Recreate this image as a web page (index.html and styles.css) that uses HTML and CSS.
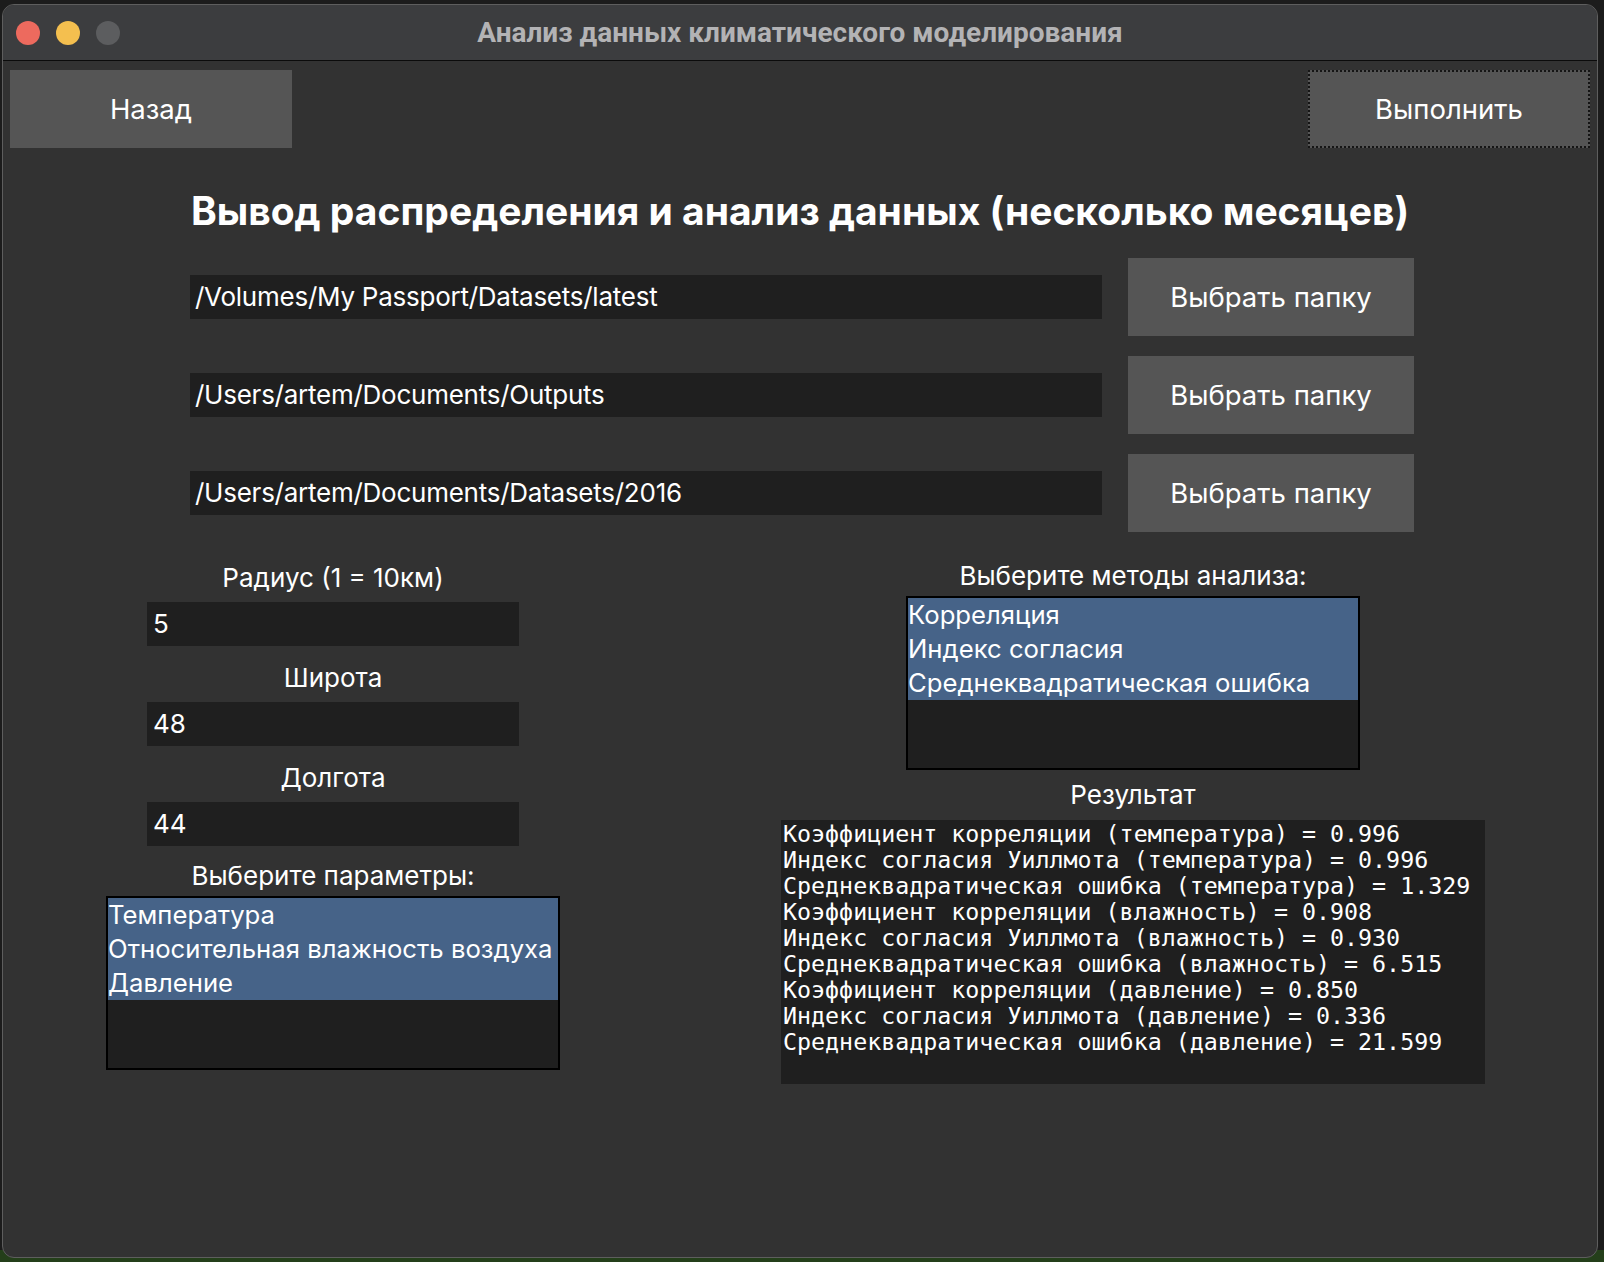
FILE: index.html
```html
<!DOCTYPE html>
<html lang="ru">
<head>
<meta charset="utf-8">
<title>Анализ данных климатического моделирования</title>
<link rel="stylesheet" href="styles.css">
</head>
<body>
<div class="window">
  <div class="titlebar">
    <div class="lights">
      <span class="light red"></span>
      <span class="light yellow"></span>
      <span class="light gray"></span>
    </div>
    <div class="title">Анализ данных климатического моделирования</div>
    <div class="spacer"></div>
  </div>
  <div class="content">
    <div class="toolbar">
      <button class="btn btn-top">Назад</button>
      <button class="btn btn-top focused">Выполнить</button>
    </div>
    <h1 class="heading">Вывод распределения и анализ данных (несколько месяцев)</h1>
    <div class="paths">
      <div class="path-row">
        <div class="entry entry-path">/Volumes/My Passport/Datasets/latest</div>
        <button class="btn btn-folder">Выбрать папку</button>
      </div>
      <div class="path-row">
        <div class="entry entry-path">/Users/artem/Documents/Outputs</div>
        <button class="btn btn-folder">Выбрать папку</button>
      </div>
      <div class="path-row">
        <div class="entry entry-path">/Users/artem/Documents/Datasets/2016</div>
        <button class="btn btn-folder">Выбрать папку</button>
      </div>
    </div>
    <div class="lower">
      <div class="col">
        <div class="field">
          <div class="label">Радиус (1 = 10км)</div>
          <div class="entry entry-small">5</div>
        </div>
        <div class="field">
          <div class="label">Широта</div>
          <div class="entry entry-small">48</div>
        </div>
        <div class="field">
          <div class="label">Долгота</div>
          <div class="entry entry-small">44</div>
        </div>
        <div class="list-label">Выберите параметры:</div>
        <div class="listbox">
          <div class="item sel">Температура</div>
          <div class="item sel">Относительная влажность воздуха</div>
          <div class="item sel">Давление</div>
        </div>
      </div>
      <div class="col">
        <div class="list-label">Выберите методы анализа:</div>
        <div class="listbox">
          <div class="item sel">Корреляция</div>
          <div class="item sel">Индекс согласия</div>
          <div class="item sel">Среднеквадратическая ошибка</div>
        </div>
        <div class="result-label">Результат</div>
        <pre class="result">Коэффициент корреляции (температура) = 0.996
Индекс согласия Уиллмота (температура) = 0.996
Среднеквадратическая ошибка (температура) = 1.329
Коэффициент корреляции (влажность) = 0.908
Индекс согласия Уиллмота (влажность) = 0.930
Среднеквадратическая ошибка (влажность) = 6.515
Коэффициент корреляции (давление) = 0.850
Индекс согласия Уиллмота (давление) = 0.336
Среднеквадратическая ошибка (давление) = 21.599</pre>
      </div>
    </div>
  </div>
</div>
</body>
</html>
```

FILE: styles.css
```css
* { box-sizing: border-box; }
html, body { margin: 0; }
body {
  width: 1604px;
  height: 1262px;
  padding: 4px 6px 4px 2px;
  background: linear-gradient(to bottom, #1c1c1c 0, #1c1c1c 1250px, #243f1a 1250px);
  font-family: "Inter", "Noto Sans", sans-serif;
  color: #ffffff;
  overflow: hidden;
}
.window {
  width: 1596px;
  height: 1254px;
  border: 1px solid #5e5e5e;
  border-radius: 12px;
  overflow: hidden;
  background: #323232;
  display: flex;
  flex-direction: column;
}
.titlebar {
  height: 56px;
  flex: none;
  background: #3c3d3f;
  border-bottom: 1px solid #0b0b0b;
  display: grid;
  grid-template-columns: 1fr auto 1fr;
  align-items: center;
}
.lights { display: flex; gap: 16px; padding-left: 13px; }
.light { width: 24px; height: 24px; border-radius: 50%; display: block; }
.red { background: #ed6a5e; }
.yellow { background: #f4bf4f; }
.gray { background: #5c5d5f; }
.title {
  font-family: "Roboto", "Liberation Sans", sans-serif;
  font-weight: 700;
  font-size: 28px;
  color: #b3b3b5;
}
.content { flex: 1; display: flex; flex-direction: column; }
.toolbar {
  display: flex;
  justify-content: space-between;
  padding: 9px 7px 0 7px;
}
.btn {
  background: #555555;
  color: #ffffff;
  border: none;
  font-family: "Inter", "Noto Sans", sans-serif;
  font-size: 27.5px;
  padding: 0;
  margin: 0;
}
.btn-top { width: 282px; height: 78px; }
.focused { outline: 2px dotted #151515; outline-offset: -2px; }
.heading {
  margin: 39px 0 0 0;
  line-height: 48px;
  font-size: 39px;
  font-weight: 700;
  text-align: center;
}
.paths {
  margin-top: 23px;
  padding-left: 187px;
  display: flex;
  flex-direction: column;
  gap: 20px;
}
.path-row { display: flex; align-items: center; gap: 26px; }
.entry {
  background: #1f1f1f;
  height: 44px;
  line-height: 44px;
  font-size: 26px;
  white-space: nowrap;
  overflow: hidden;
}
.entry-path { width: 912px; padding-left: 5px; letter-spacing: -0.25px; }
.btn-folder { width: 286px; height: 78px; }
.lower {
  margin-top: 14px;
  display: grid;
  grid-template-columns: 660px 800px;
  column-gap: 70px;
}
.col { display: flex; flex-direction: column; align-items: center; }
.field { margin-top: 8px; display: flex; flex-direction: column; align-items: center; }
.label { line-height: 48px; font-size: 26px; }
.entry-small { width: 372px; padding-left: 6px; }
.list-label { margin-top: 10px; line-height: 40px; height: 40px; font-size: 26px; }
.listbox {
  width: 454px;
  height: 174px;
  border: 2px solid #000000;
  background: #1f1f1f;
}
.item {
  height: 34px;
  line-height: 34px;
  font-size: 25.7px;
  white-space: nowrap;
  overflow: hidden;
}
.sel { background: #466388; }
.result-label { line-height: 50px; height: 50px; font-size: 26px; }
.result {
  width: 704px;
  height: 264px;
  margin: 0;
  padding: 1px 2px;
  background: #1f1f1f;
  font-family: "DejaVu Sans Mono", "Liberation Mono", monospace;
  font-size: 23.3px;
  line-height: 26px;
  color: #ffffff;
}
```
